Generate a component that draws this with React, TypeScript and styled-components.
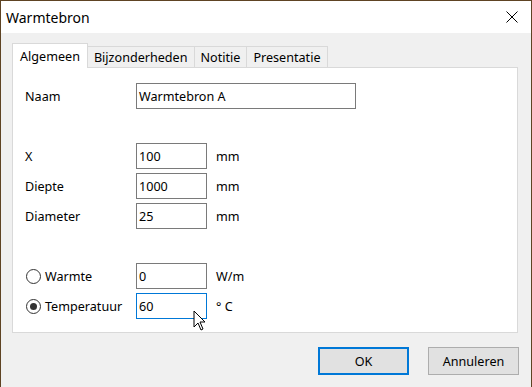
import React from "react";
import styled, { createGlobalStyle } from "styled-components";

const GlobalStyle = createGlobalStyle`
  body {
    margin: 0;
    background: #f0f0f0;
    font-family: "Noto Sans", "Liberation Sans", sans-serif;
    font-size: 12.6px;
    color: #000;
  }
`;

const Window = styled.div`
  position: relative;
  width: 532px;
  height: 387px;
  box-sizing: border-box;
  border: 1px solid #5e4323;
  border-bottom: none;
  background: #f0f0f0;
  display: flex;
  flex-direction: column;
  overflow: hidden;
`;

const TitleBar = styled.div`
  height: 32px;
  flex: none;
  background: #fff;
  display: flex;
  align-items: center;
  justify-content: space-between;
  padding: 0 13px 0 5px;
`;

const Title = styled.span`
  font-size: 14px;
  color: #000;
`;

const Body = styled.div`
  flex: 1;
  padding: 10px 13px 0 11px;
  display: flex;
  flex-direction: column;
`;

const TabRow = styled.div`
  display: flex;
  align-items: flex-end;
  height: 24px;
`;

const Tab = styled.div<{ $active?: boolean }>`
  position: relative;
  box-sizing: border-box;
  height: ${(p) => (p.$active ? "25px" : "21px")};
  margin-bottom: ${(p) => (p.$active ? "-1px" : "0")};
  margin-left: -1px;
  padding: 0 ${(p) => (p.$active ? "7px" : "6px")};
  display: flex;
  align-items: center;
  background: ${(p) => (p.$active ? "#fff" : "#f0f0f0")};
  border: 1px solid #d9d9d9;
  border-bottom: none;
  z-index: ${(p) => (p.$active ? 2 : 1)};
  &:first-child {
    margin-left: 0;
  }
`;

const Panel = styled.div`
  height: 266px;
  box-sizing: border-box;
  background: #fff;
  border: 1px solid #d9d9d9;
  padding: 15px 12px 0 12px;
  display: flex;
  flex-direction: column;
`;

const Group = styled.div`
  display: flex;
  flex-direction: column;
  gap: 4px;
  & + & {
    margin-top: 34px;
  }
`;

const Row = styled.div`
  display: grid;
  grid-template-columns: 102px auto auto;
  justify-content: start;
  align-items: center;
  column-gap: 9px;
  height: 26px;
`;

const Label = styled.label`
  display: flex;
  align-items: center;
`;

const Input = styled.div<{ $width: number; $focus?: boolean }>`
  position: relative;
  box-sizing: border-box;
  width: ${(p) => p.$width}px;
  height: 26px;
  border: 1px solid ${(p) => (p.$focus ? "#0078d7" : "#7a7a7a")};
  background: #fff;
  padding: 0 2px;
  display: flex;
  align-items: center;
`;

const Unit = styled.span``;

const Radio = styled.span<{ $checked?: boolean }>`
  box-sizing: border-box;
  width: 15px;
  height: 15px;
  margin: 0 4px 0 1px;
  border-radius: 50%;
  border: 1px solid #333;
  display: flex;
  align-items: center;
  justify-content: center;
  &::after {
    content: "";
    width: 7px;
    height: 7px;
    border-radius: 50%;
    background: ${(p) => (p.$checked ? "#333" : "transparent")};
  }
`;

const Footer = styled.div`
  display: flex;
  justify-content: flex-end;
  gap: 19px;
  padding: 14px 0 0 0;
  margin-right: -1px;
`;

const Button = styled.button<{ $primary?: boolean }>`
  box-sizing: border-box;
  width: 91px;
  height: 28px;
  font: inherit;
  color: #000;
  background: #e1e1e1;
  border: ${(p) => (p.$primary ? "2px solid #0078d7" : "1px solid #adadad")};
  padding: 0;
`;

const Cursor = styled.svg`
  position: absolute;
  left: 192px;
  top: 309px;
  z-index: 5;
`;

export default function App() {
  return (
    <>
      <GlobalStyle />
      <Window>
        <TitleBar>
          <Title>Warmtebron</Title>
          <svg width="12" height="12" viewBox="0 0 12 12">
            <path d="M0.5 0.5 L11.5 11.5 M11.5 0.5 L0.5 11.5" stroke="#000" strokeWidth="1" />
          </svg>
        </TitleBar>
        <Body>
          <TabRow>
            <Tab $active>Algemeen</Tab>
            <Tab>Bijzonderheden</Tab>
            <Tab>Notitie</Tab>
            <Tab>Presentatie</Tab>
          </TabRow>
          <Panel>
            <Group>
              <Row>
                <Label>Naam</Label>
                <Input $width={220}>Warmtebron A</Input>
              </Row>
            </Group>
            <Group>
              <Row>
                <Label>X</Label>
                <Input $width={71}>100</Input>
                <Unit>mm</Unit>
              </Row>
              <Row>
                <Label>Diepte</Label>
                <Input $width={71}>1000</Input>
                <Unit>mm</Unit>
              </Row>
              <Row>
                <Label>Diameter</Label>
                <Input $width={71}>25</Input>
                <Unit>mm</Unit>
              </Row>
            </Group>
            <Group>
              <Row>
                <Label>
                  <Radio />
                  Warmte
                </Label>
                <Input $width={71}>0</Input>
                <Unit>W/m</Unit>
              </Row>
              <Row>
                <Label>
                  <Radio $checked />
                  Temperatuur
                </Label>
                <Input $width={71} $focus>
                  60
                </Input>
                <Unit>° C</Unit>
              </Row>
            </Group>
          </Panel>
          <Footer>
            <Button $primary>OK</Button>
            <Button>Annuleren</Button>
          </Footer>
        </Body>
        <Cursor width="16" height="24" viewBox="0 0 16 24">
          <path d="M1 1 L1 17 L5 13 L8 20 L10 19 L7 12 L12 12 Z" fill="#fff" stroke="#000" strokeWidth="1" strokeLinejoin="round" />
        </Cursor>
      </Window>
    </>
  );
}
